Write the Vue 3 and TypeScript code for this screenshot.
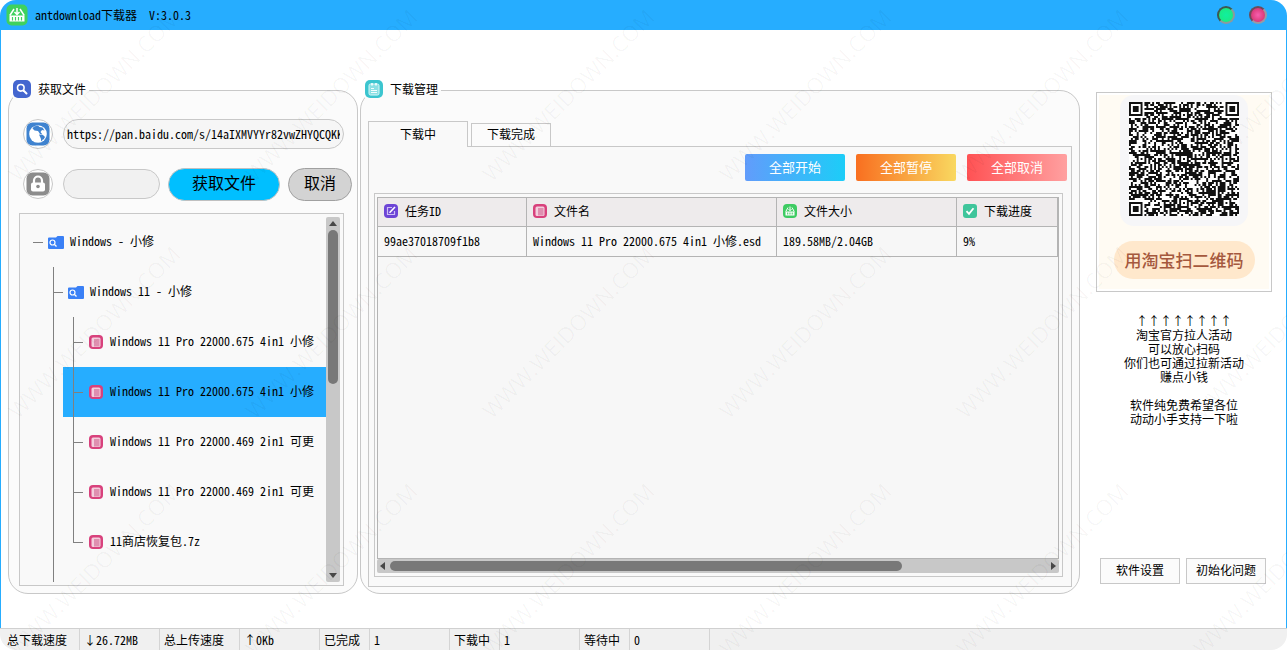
<script setup lang="ts">
import { ref } from 'vue'

interface TreeNode {
  label: string
  depth: number
  kind: 'folder' | 'file'
  last?: boolean
}

const shareUrl = ref('https://pan.baidu.com/s/14aIXMVYYr82vwZHYQCQKK3w')
const password = ref('')
const selected = ref(3)
const activeTab = ref(0)

const nodes: TreeNode[] = [
  { label: 'Windows - 小修', depth: 0, kind: 'folder' },
  { label: 'Windows 11 - 小修', depth: 1, kind: 'folder' },
  { label: 'Windows 11 Pro 22000.675 4in1 小修', depth: 2, kind: 'file' },
  { label: 'Windows 11 Pro 22000.675 4in1 小修', depth: 2, kind: 'file' },
  { label: 'Windows 11 Pro 22000.469 2in1 可更', depth: 2, kind: 'file' },
  { label: 'Windows 11 Pro 22000.469 2in1 可更', depth: 2, kind: 'file' },
  { label: '11商店恢复包.7z', depth: 2, kind: 'file', last: true },
]

const tabs = ['下载中', '下载完成']

const tasks = [
  { id: '99ae37018709f1b8', name: 'Windows 11 Pro 22000.675 4in1 小修.esd', size: '189.58MB/2.04GB', progress: '9%' },
]

const status = [
  { text: '总下载速度', wide: true },
  { text: '↓26.72MB', wide: true },
  { text: '总上传速度', wide: true },
  { text: '↑0Kb', wide: true },
  { text: '已完成', wide: false },
  { text: '1', wide: true },
  { text: '下载中', wide: false },
  { text: '1', wide: true },
  { text: '等待中', wide: false },
  { text: '0', wide: true },
]

const notice = ['↑↑↑↑↑↑↑↑', '淘宝官方拉人活动', '可以放心扫码', '你们也可通过拉新活动', '赚点小钱', '', '软件纯免费希望各位', '动动小手支持一下啦']

const QR_SIZE = 57

function ring(x: number, y: number, cx: number, cy: number, radius: number): number {
  const d = Math.max(Math.abs(x - cx), Math.abs(y - cy))
  return d <= radius ? d : -1
}

function buildQr(): string {
  let seed = 20231
  let path = ''
  const finders = [[3, 3], [QR_SIZE - 4, 3], [3, QR_SIZE - 4]]
  const aligns = [[28, 6], [6, 28], [28, 28], [50, 28], [28, 50], [50, 50]]
  for (let y = 0; y < QR_SIZE; y++) {
    for (let x = 0; x < QR_SIZE; x++) {
      seed = (seed * 1103515245 + 12345) % 2147483648
      let dark = seed / 2147483648 < 0.54
      for (const [cx, cy] of aligns) {
        const d = ring(x, y, cx, cy, 2)
        if (d >= 0) dark = d !== 1
      }
      for (const [cx, cy] of finders) {
        const d = ring(x, y, cx, cy, 4)
        if (d >= 0) dark = d === 3 || d <= 1
      }
      if (dark) path += `M${x} ${y}h1v1h-1z`
    }
  }
  return path
}

const qrPath = buildQr()

const marks: { x: number; y: number }[] = []
for (let row = 0; row < 4; row++) {
  for (let col = -1; col < 6; col++) {
    marks.push({ x: 18 + col * 237, y: 183 + row * 237 })
  }
}
</script>

<template>
  <div class="window">
    <header class="titlebar">
      <svg class="app-icon" viewBox="0 0 22 22" aria-hidden="true">
        <rect x="0.5" y="0.5" width="21" height="21" rx="5" fill="#3fd15f" />
        <path d="M8 5 3.800 11.500M14 5l4.200 6.500M11 4v6M8.500 8 11 10.500 13.500 8" fill="none" stroke="#fff" stroke-width="1.500" />
        <path d="M3.500 11.500h15v6h-15z" fill="#fff" />
        <path d="M6.500 13v3.500M9.500 13v3.500M12.500 13v3.500M15.500 13v3.500" stroke="#3fd15f" stroke-width="1.200" />
      </svg>
      <h1>antdownload下载器&nbsp; V:3.0.3</h1>
      <button class="orb green" type="button" aria-label="最小化"></button>
      <button class="orb pink" type="button" aria-label="关闭"></button>
    </header>

    <main class="content">
      <fieldset class="panel">
        <legend>
          <svg class="legend-icon" viewBox="0 0 18 18" aria-hidden="true">
            <rect width="18" height="18" rx="5" fill="#4466cf" />
            <circle cx="7.800" cy="7.800" r="3.300" fill="none" stroke="#fff" stroke-width="1.600" />
            <path d="M10.500 10.500 13.500 13.500" stroke="#fff" stroke-width="2" stroke-linecap="round" />
          </svg>
          获取文件
        </legend>
        <div class="source">
          <div class="field-row">
            <span class="round">
              <svg viewBox="0 0 24 24" aria-hidden="true">
                <rect x="0.500" y="0.500" width="23" height="23" rx="6" fill="#3f83d0" />
                <circle cx="12" cy="12" r="8.800" fill="#fff" />
                <path d="M8 4.500 12 3.500l1.500 1.500 3 .5 2 3-2.500-.5-1.500 2 2 2.500-2.500-.5-2-3-3.500-.5-2-2zM13 12.500l4 .5 2 2-1.500 2.500-2.500-.5zM15 17l2 .5-2 2z" fill="#3f83d0" />
              </svg>
            </span>
            <input v-model="shareUrl" class="pill-input" type="text" aria-label="分享链接" />
          </div>
          <div class="field-row">
            <span class="round">
              <svg viewBox="0 0 24 24" aria-hidden="true">
                <rect x="0.500" y="0.500" width="23" height="23" rx="6" fill="#8c8c8c" />
                <path d="M8 11V8.500a4 4 0 0 1 8 0V11" fill="none" stroke="#fff" stroke-width="2.200" />
                <rect x="5" y="10.500" width="14" height="9" rx="2" fill="#fff" />
                <circle cx="12" cy="14.500" r="1.800" fill="#8c8c8c" />
              </svg>
            </span>
            <input v-model="password" class="pill-input short" type="text" aria-label="提取码" />
            <button class="fetch" type="button">获取文件</button>
            <button class="cancel" type="button">取消</button>
          </div>

          <div class="tree-box">
            <div class="tree" role="tree" aria-label="文件列表">
              <div
                v-for="(node, i) in nodes"
                :key="i"
                class="tree-row"
                role="treeitem"
                :aria-selected="i === selected"
                @click="selected = i"
              >
                <span v-for="g in node.depth" :key="g" class="guide" :class="{ line: g === 2 }"></span>
                <span class="node" :class="{ selected: i === selected }">
                  <span class="elbow" :class="{ trunk: node.depth > 0, last: node.last }"></span>
                  <svg v-if="node.kind === 'folder'" class="folder-icon" viewBox="0 0 16 13" aria-hidden="true">
                    <path d="M8 1.500 9.500 0H15a1 1 0 0 1 1 1v11a1 1 0 0 1-1 1H1a1 1 0 0 1-1-1V2.500a1 1 0 0 1 1-1z" fill="#3a80f6" />
                    <circle cx="4.500" cy="6.500" r="2.500" fill="none" stroke="#fff" stroke-width="1.200" />
                    <path d="M6.500 8.500 8.500 10.500" stroke="#fff" stroke-width="1.300" />
                  </svg>
                  <svg v-else class="file-icon" viewBox="0 0 14 14" aria-hidden="true">
                    <rect width="14" height="14" rx="4" fill="#d8417c" />
                    <rect x="2.500" y="2.500" width="9" height="9.500" rx="1.500" fill="#f3cfdd" />
                    <rect x="5" y="4" width="5.500" height="7.500" fill="#df8fb0" />
                  </svg>
                  <span class="label">{{ node.label }}</span>
                </span>
              </div>
              <div class="tree-row rest"><span class="guide"></span><span class="guide line"></span></div>
            </div>
            <div class="vbar" aria-hidden="true">
              <span class="arrow up"></span>
              <span class="vthumb"></span>
              <span class="arrow down"></span>
            </div>
          </div>
        </div>
      </fieldset>

      <fieldset class="panel">
        <legend>
          <svg class="legend-icon" viewBox="0 0 18 18" aria-hidden="true">
            <rect width="18" height="18" rx="5" fill="#3cc5cf" />
            <rect x="4" y="4" width="10" height="11" rx="1.500" fill="#8be0e4" stroke="#d8f7f8" />
            <path d="M7 3v2.500M11 3v2.500" stroke="#fff" stroke-width="1.500" />
            <path d="M6 8.500h3M6 10.500h6M6 12.500h6" stroke="#fff" stroke-width="0.900" />
          </svg>
          下载管理
        </legend>
        <div class="manager">
          <div class="tabs" role="tablist">
            <button
              v-for="(tab, i) in tabs"
              :key="tab"
              class="tab"
              :class="{ active: i === activeTab }"
              type="button"
              role="tab"
              :aria-selected="i === activeTab"
              @click="activeTab = i"
            >{{ tab }}</button>
          </div>
          <div class="page" role="tabpanel">
            <div class="actions">
              <button class="action start" type="button">全部开始</button>
              <button class="action pause" type="button">全部暂停</button>
              <button class="action stop" type="button">全部取消</button>
            </div>
            <div class="grid-frame">
              <div class="grid-view">
                <table>
                  <colgroup>
                    <col class="c-id" />
                    <col class="c-name" />
                    <col class="c-size" />
                    <col />
                  </colgroup>
                  <thead>
                    <tr>
                      <th scope="col">
                        <span class="head">
                          <svg class="file-icon" viewBox="0 0 14 14" aria-hidden="true">
                            <rect width="14" height="14" rx="4" fill="#6d45d6" />
                            <path d="M8 3.500H3.500v7h7V7" fill="none" stroke="#cdbdf5" stroke-width="1.200" />
                            <path d="M5.500 8.800 11 3" stroke="#fff" stroke-width="1.600" />
                          </svg>
                          任务ID
                        </span>
                      </th>
                      <th scope="col">
                        <span class="head">
                          <svg class="file-icon" viewBox="0 0 14 14" aria-hidden="true">
                            <rect width="14" height="14" rx="4" fill="#d8417c" />
                            <rect x="2.500" y="2.500" width="9" height="9.500" rx="1.500" fill="#f3cfdd" />
                            <rect x="5" y="4" width="5.500" height="7.500" fill="#df8fb0" />
                          </svg>
                          文件名
                        </span>
                      </th>
                      <th scope="col">
                        <span class="head">
                          <svg class="file-icon" viewBox="0 0 14 14" aria-hidden="true">
                            <rect width="14" height="14" rx="4" fill="#3ecb62" />
                            <path d="M5 3.500 2.800 7.500M9 3.500l2.200 4M7 2.500v4M5.500 5.200 7 6.700 8.500 5.200" fill="none" stroke="#fff" />
                            <path d="M2.500 7.500h9v4h-9z" fill="#fff" />
                            <path d="M4.500 8.500v2M6.200 8.500v2M7.900 8.500v2M9.600 8.500v2" stroke="#3ecb62" stroke-width="0.800" />
                          </svg>
                          文件大小
                        </span>
                      </th>
                      <th scope="col">
                        <span class="head">
                          <svg class="file-icon" viewBox="0 0 14 14" aria-hidden="true">
                            <rect width="14" height="14" rx="3" fill="#3fc59b" />
                            <path d="M3.500 7.200 6 9.800 10.500 4.300" fill="none" stroke="#fff" stroke-width="1.800" />
                          </svg>
                          下载进度
                        </span>
                      </th>
                    </tr>
                  </thead>
                  <tbody>
                    <tr v-for="task in tasks" :key="task.id">
                      <td>{{ task.id }}</td>
                      <td>{{ task.name }}</td>
                      <td>{{ task.size }}</td>
                      <td>{{ task.progress }}</td>
                    </tr>
                  </tbody>
                </table>
              </div>
              <div class="hbar" aria-hidden="true">
                <span class="arrow left"></span>
                <span class="htrack"><span class="hthumb"></span></span>
                <span class="arrow right"></span>
              </div>
            </div>
          </div>
        </div>
      </fieldset>

      <aside class="side">
        <div class="promo">
          <div class="promo-inner">
            <div class="qr-card">
              <svg class="qr" :viewBox="`0 0 ${QR_SIZE} ${QR_SIZE}`" preserveAspectRatio="none" role="img" aria-label="淘宝二维码">
                <rect :width="QR_SIZE" :height="QR_SIZE" fill="#fff" />
                <path :d="qrPath" fill="#111" />
              </svg>
            </div>
            <strong class="scan">用淘宝扫二维码</strong>
          </div>
        </div>
        <div class="notice">
          <p v-for="(line, i) in notice" :key="i">{{ line }}</p>
        </div>
        <div class="side-actions">
          <button type="button">软件设置</button>
          <button type="button">初始化问题</button>
        </div>
      </aside>
    </main>

    <footer class="statusbar">
      <span v-for="(cell, i) in status" :key="i" class="cell" :class="{ wide: cell.wide }">{{ cell.text }}</span>
    </footer>

    <svg class="watermark" aria-hidden="true">
      <text v-for="(m, i) in marks" :key="i" :transform="`translate(${m.x} ${m.y}) rotate(-45)`">WWW.WEIDOWN.COM</text>
    </svg>
  </div>
</template>

<style>
body {
  margin: 0;
  background: #fff;
}
</style>

<style scoped>
* {
  box-sizing: border-box;
}

.window {
  position: relative;
  display: flex;
  flex-direction: column;
  min-height: 100vh;
  overflow: hidden;
  border-radius: 16px;
  background: #fff;
  color: #000;
  font: 12px/16px "Noto Sans CJK SC", "Liberation Mono", sans-serif;
  font-feature-settings: "hwid";
}

button,
input {
  margin: 0;
  padding: 0 0 2px;
  color: inherit;
  font: inherit;
  font-feature-settings: inherit;
}

.titlebar {
  display: flex;
  align-items: center;
  height: 30px;
  padding: 0 20px 0 6px;
  background: #26adff;
}

.app-icon {
  width: 22px;
  height: 22px;
}

h1 {
  flex: 1;
  margin: 0 0 0 7px;
  font-size: 12px;
  font-weight: 400;
}

.orb {
  width: 18px;
  height: 18px;
  margin-left: 14px;
  border: 2px solid #63707a;
  border-radius: 50%;
}

.green {
  border-color: #3d5a50 #8c9a9c #8c9a9c #3d5a50;
  background: radial-gradient(circle, #10f0a0, #1ee878);
}

.pink {
  border-color: #6b4b5a #9a9aa4 #9a9aa4 #6b4b5a;
  background: radial-gradient(circle, #f65fae, #cf2a62);
}

.content {
  display: grid;
  flex: 1;
  grid-template-columns: 350px 1fr 176px;
  padding: 50px 14px 34px 7px;
  border: solid #26adff;
  border-width: 0 1px;
}

.panel {
  display: flex;
  min-width: 0;
  margin: 0;
  padding: 0;
  border: 1px solid #c8c8c8;
  border-radius: 20px;
  background: #fbfbfb;
}

.panel + .panel {
  margin: 0 16px 0 2px;
}

legend {
  display: flex;
  align-items: center;
  gap: 7px;
  height: 21px;
  margin-left: 4px;
  padding: 0 3px 3px 0;
}

.legend-icon {
  width: 18px;
  height: 18px;
}

.source {
  display: flex;
  flex: 1;
  flex-direction: column;
  min-width: 0;
  padding: 17px 13px 7px 10px;
}

.field-row {
  display: flex;
  align-items: center;
  height: 32px;
  margin-bottom: 18px;
  padding-left: 4px;
}

.round {
  display: grid;
  flex: none;
  place-items: center;
  width: 30px;
  height: 30px;
  margin-right: 10px;
  border: 1px solid #c8c8c8;
  border-radius: 50%;
  background: #fff;
}

.round svg {
  width: 24px;
  height: 24px;
}

.pill-input {
  flex: 1;
  min-width: 0;
  height: 30px;
  padding: 0 3px 2px;
  border: 1px solid #c8c8c8;
  border-radius: 15px;
  background: #f6f6f6;
}

.short {
  background: #f1f1f1;
}

.fetch,
.cancel {
  height: 33px;
  margin-left: 8px;
  padding-bottom: 5px;
  border: 1px solid #c0c0c0;
  border-radius: 17px;
  font-size: 16px;
}

.fetch {
  width: 112px;
  background: #00bfff;
}

.cancel {
  width: 64px;
  margin-right: -8px;
  border-color: #a0a0a0;
  background: #d3d3d3;
}

.tree-box {
  display: flex;
  flex: 1;
  margin-top: -5px;
  padding: 3px;
  border: 1px solid #c8c8c8;
  background: #f9f9f9;
}

.tree {
  display: flex;
  flex: 1;
  flex-direction: column;
  min-width: 0;
}

.tree-row {
  display: flex;
  height: 50px;
}

.rest {
  flex: 1;
  height: auto;
}

.guide {
  flex: none;
  width: 20px;
}

.line {
  background: linear-gradient(#808080, #808080) 10px 0 / 1px 100% no-repeat;
}

.node {
  display: flex;
  flex: 1;
  align-items: center;
  min-width: 0;
  overflow: hidden;
  white-space: nowrap;
}

.label {
  padding-bottom: 2px;
}

.selected {
  background: #26adff;
}

.elbow {
  flex: none;
  width: 20px;
  height: 50px;
  background: linear-gradient(#808080, #808080) 10px 25px / 10px 1px no-repeat;
}

.trunk {
  background:
    linear-gradient(#808080, #808080) 10px 25px / 10px 1px no-repeat,
    linear-gradient(#808080, #808080) 10px 0 / 1px 100% no-repeat;
}

.last {
  background:
    linear-gradient(#808080, #808080) 10px 25px / 10px 1px no-repeat,
    linear-gradient(#808080, #808080) 10px 0 / 1px 25px no-repeat;
}

.folder-icon {
  flex: none;
  width: 16px;
  height: 13px;
  margin: 0 6px 0 5px;
}

.file-icon {
  flex: none;
  width: 14px;
  height: 14px;
}

.node .file-icon {
  margin: 0 7px 0 6px;
}

.vbar {
  display: flex;
  flex-direction: column;
  align-items: center;
  width: 14px;
  padding: 4px 0;
  border-radius: 2px;
  background: #c8c8c8;
}

.vthumb {
  width: 10px;
  height: 43%;
  margin: 4px 0 auto;
  border-radius: 5px;
  background: #787878;
}

.arrow {
  flex: none;
  border: 4px solid transparent;
}

.up {
  border-top-width: 0;
  border-bottom: 5px solid #484848;
}

.down {
  border-top: 5px solid #484848;
  border-bottom-width: 0;
}

.left {
  border-right: 5px solid #484848;
  border-left-width: 0;
}

.right {
  border-right-width: 0;
  border-left: 5px solid #484848;
}

.manager {
  display: flex;
  flex: 1;
  flex-direction: column;
  min-width: 0;
  padding: 20px 7px 6px;
}

.tabs {
  display: flex;
  align-items: flex-end;
  gap: 3px;
}

.tab {
  width: 80px;
  height: 23px;
  border: 1px solid #c8c8c8;
  border-bottom: 0;
  background: #fbfbfb;
}

.tab.active {
  z-index: 1;
  width: 100px;
  height: 26px;
  margin-bottom: -1px;
  background: #f9f9f9;
}

.page {
  display: flex;
  flex: 1;
  flex-direction: column;
  padding: 7px 4px 9px;
  border: 1px solid #c8c8c8;
  background: #f9f9f9;
}

.actions {
  display: flex;
  justify-content: flex-end;
  gap: 11px;
}

.action {
  width: 100px;
  height: 27px;
  border: 0;
  border-radius: 2px;
  color: #fff;
  font-size: 13px;
}

.start {
  background: linear-gradient(90deg, #629cfb, #1ccdf8);
}

.pause {
  background: linear-gradient(90deg, #f96f20, #f9d860);
}

.stop {
  background: linear-gradient(90deg, #ff5254, #ffa0a0);
}

.grid-frame {
  display: flex;
  flex: 1;
  flex-direction: column;
  margin: 12px 4px 0 1px;
  padding: 3px 3px 3px 2px;
  border: 1px solid #c8c8c8;
}

.grid-view {
  flex: 1;
  border: 1px solid #b4b4b4;
  background: #f7f7f7;
}

table {
  width: 100%;
  table-layout: fixed;
  border-spacing: 0;
}

.c-id {
  width: 149px;
}

.c-name {
  width: 250px;
}

.c-size {
  width: 180px;
}

th,
td {
  overflow: hidden;
  height: 30px;
  padding: 0 5px 2px 6px;
  border-right: 1px solid #b4b4b4;
  border-bottom: 1px solid #b4b4b4;
  font-weight: 400;
  text-align: left;
  white-space: nowrap;
}

th {
  height: 29px;
  background: #eeebec;
}

.head {
  display: flex;
  align-items: center;
  gap: 7px;
}

.hbar {
  display: flex;
  align-items: center;
  height: 14px;
  padding: 0 3px;
  border-radius: 2px;
  background: #c8c8c8;
}

.htrack {
  flex: 1;
  height: 10px;
  margin: 0 5px;
}

.hthumb {
  display: block;
  width: 78%;
  height: 10px;
  border-radius: 5px;
  background: #787878;
}

.side {
  display: flex;
  flex-direction: column;
  padding: 12px 0 10px;
}

.promo {
  padding: 2px;
  border: 1px solid #c8c8c8;
  background: #fff;
}

.promo-inner {
  display: flex;
  flex-direction: column;
  align-items: center;
  padding: 0 0 10px;
  background: #fffbf3;
}

.qr-card {
  padding: 7px 9px 10px;
  border-radius: 14px;
  background: #f6f6f8;
}

.qr {
  display: block;
  width: 110px;
  height: 114px;
}

.scan {
  height: 38px;
  margin-top: 15px;
  padding: 0 11px;
  border-radius: 19px;
  background: #ffe8cc;
  color: #a5583d;
  font-size: 17px;
  font-weight: 500;
  line-height: 38px;
}

.notice {
  margin-top: 22px;
  text-align: center;
}

.notice p {
  height: 14px;
  margin: 0;
  line-height: 14px;
}

.side-actions {
  display: flex;
  justify-content: center;
  gap: 6px;
  margin: auto 2px 0 0;
}

.side-actions button {
  width: 80px;
  height: 26px;
  border: 1px solid #c8c8c8;
  background: #fbfbfb;
}

.statusbar {
  display: flex;
  height: 22px;
  border-top: 1px solid #d0d0d0;
  background: #f0f0f0;
}

.cell {
  width: 50px;
  padding: 3px 4px;
  border-right: 1px solid #d4d4d4;
  white-space: nowrap;
}

.wide {
  width: 80px;
}

.cell:first-child {
  padding-left: 7px;
}

.watermark {
  position: absolute;
  inset: 0;
  width: 100%;
  height: 100%;
  pointer-events: none;
}

.watermark text {
  fill: rgba(0, 0, 0, 0.035);
  font-family: "Open Sans", sans-serif;
  font-size: 22px;
}
</style>
